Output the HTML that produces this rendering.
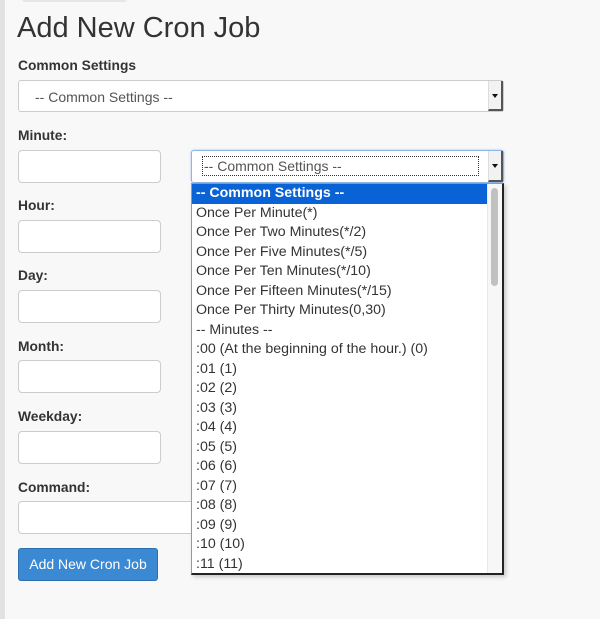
<!DOCTYPE html>
<html><head><meta charset="utf-8"><style>
body{margin:0;width:600px;height:619px;background:#f8f8f8;font-family:"Liberation Sans",sans-serif;color:#333;position:relative;overflow:hidden}
.lb{position:absolute;left:0;top:0;width:5px;height:619px;background:#e2e2e2}
.tab{position:absolute;left:22px;top:-4px;width:105px;height:6px;border-radius:3px;background:#e6e6e6}
.a{position:absolute}
h1{position:absolute;left:17px;top:12px;margin:0;font-weight:normal;font-size:29px;color:#333}
.l{position:absolute;left:18px;font-weight:bold;font-size:13.8px;color:#333}
.in{position:absolute;left:18px;width:143px;height:33px;background:#fff;border:1px solid #ccc;border-radius:4px;box-sizing:border-box}
.sel{position:absolute;background:#fff;border:1px solid #ccc;border-radius:3px;box-sizing:border-box;font-size:14px;color:#555}
.arr{position:absolute;right:0;top:0;bottom:0;width:12px;background:#f2f2f2;border-left:1px solid #ddd;border-right:2px solid #555;border-bottom:2px solid #555}
.arr:after{content:"";position:absolute;left:3px;top:13px;border-left:3px solid transparent;border-right:3px solid transparent;border-top:4px solid #111}
.dd{position:absolute;left:191px;top:183px;width:313px;height:392px;background:#fff;border:1px solid #999;border-right:2px solid #222;border-bottom:2px solid #222;box-sizing:border-box;box-shadow:2px 2px 4px rgba(0,0,0,.2);overflow:hidden}
.it{height:19.5px;line-height:19.5px;font-size:14.2px;color:#333;padding-left:4px;width:298px;box-sizing:border-box;white-space:nowrap}
.hi{background:#0a63d6;color:#fff;font-weight:bold}
.sb{position:absolute;right:0;top:0;width:14px;height:100%;background:#f7f7f7;border-left:1px solid #e8e8e8}
.th{position:absolute;left:3px;top:4px;width:7px;height:98px;border-radius:4px;background:#c1c1c1}
.btn{position:absolute;left:18px;top:548px;width:140px;height:33px;background:#3a89d2;border:1px solid #2c6fb0;border-radius:3px;box-sizing:border-box;color:#fff;font-size:14px;text-align:center;line-height:31px}
</style></head><body>
<div class="lb"></div><div class="tab"></div>
<h1>Add New Cron Job</h1>
<div class="l" style="top:58px">Common Settings</div>
<div class="sel" style="left:18px;top:80px;width:486px;height:32px"><span class="a" style="left:16px;top:8px">-- Common Settings --</span><div class="arr"></div></div>
<div class="l" style="top:128px">Minute:</div>
<div class="in" style="top:150px"></div>
<div class="sel" style="left:191px;top:150px;width:313px;height:33px;border-color:#8fb7e6;box-shadow:0 0 2px #9cc3ee"><div class="a" style="left:10px;top:5px;width:275px;height:18px;border:1px dotted #333"></div><span class="a" style="left:12px;top:7px">-- Common Settings --</span><div class="arr"></div></div>
<div class="l" style="top:198px">Hour:</div><div class="in" style="top:220px"></div>
<div class="l" style="top:268px">Day:</div><div class="in" style="top:290px"></div>
<div class="l" style="top:339px">Month:</div><div class="in" style="top:360px"></div>
<div class="l" style="top:409px">Weekday:</div><div class="in" style="top:431px"></div>
<div class="l" style="top:480px">Command:</div><div class="in" style="top:501px;width:200px"></div>
<div class="btn">Add New Cron Job</div>
<div class="dd">
<div class="it hi">-- Common Settings --</div>
<div class="it">Once Per Minute(*)</div>
<div class="it">Once Per Two Minutes(*/2)</div>
<div class="it">Once Per Five Minutes(*/5)</div>
<div class="it">Once Per Ten Minutes(*/10)</div>
<div class="it">Once Per Fifteen Minutes(*/15)</div>
<div class="it">Once Per Thirty Minutes(0,30)</div>
<div class="it">-- Minutes --</div>
<div class="it">:00 (At the beginning of the hour.) (0)</div>
<div class="it">:01 (1)</div><div class="it">:02 (2)</div><div class="it">:03 (3)</div><div class="it">:04 (4)</div><div class="it">:05 (5)</div><div class="it">:06 (6)</div><div class="it">:07 (7)</div><div class="it">:08 (8)</div><div class="it">:09 (9)</div><div class="it">:10 (10)</div><div class="it">:11 (11)</div>
<div class="sb"><div class="th"></div></div>
</div>
</body></html>
